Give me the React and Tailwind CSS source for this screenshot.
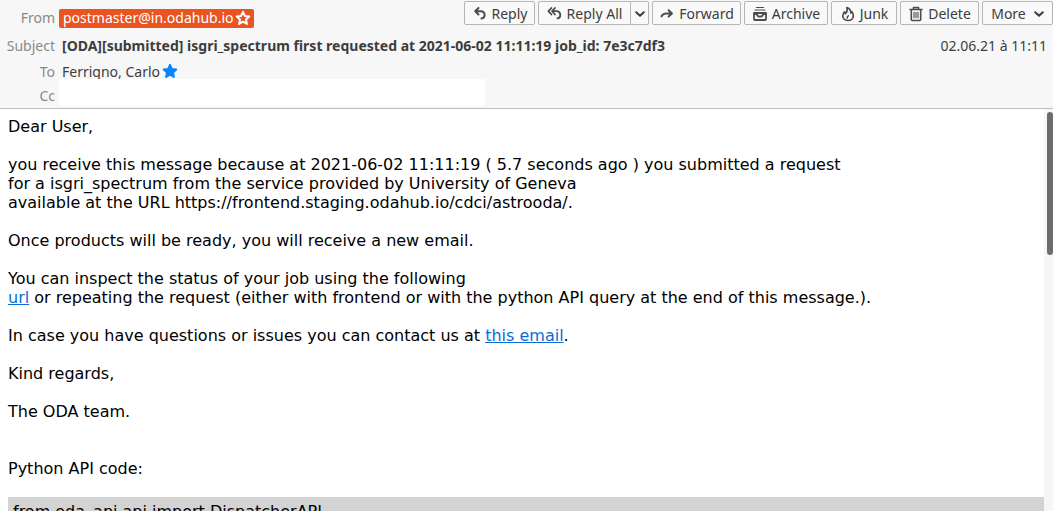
import React from "react";

const Icon = ({ children, className = "" }) => (
  <svg
    viewBox="0 0 16 16"
    className={"size-4 shrink-0 fill-none stroke-[#4c4c4c] stroke-2 " + className}
    strokeLinecap="round"
    strokeLinejoin="round"
    aria-hidden="true"
  >
    {children}
  </svg>
);

const ReplyIcon = () => (
  <Icon>
    <path d="M6.500 2 3.200 5.200l3.300 3.300M3.600 5.200H9a3.600 3.600 0 0 1 3.600 3.700c0 1.900-1.200 3.200-3.100 3.500" />
  </Icon>
);
const ReplyAllIcon = () => (
  <Icon>
    <path d="M4.400 2 1.400 5.200l3 3.300M8 2 5 5.200l3 3.300M5.400 5.200h4.200a3.600 3.600 0 0 1 3.700 3.700c0 1.900-1 3.200-2.800 3.500" strokeWidth="1.800" />
  </Icon>
);
const ForwardIcon = () => (
  <Icon>
    <path d="M9.600 4.200 13 7.400l-3.400 3.200M12.600 7.400H7.500c-2.600 0-4.200 1-5 3" />
  </Icon>
);
const ArchiveIcon = () => (
  <Icon>
    <path d="M4.500 1.500h7M3 4h10" strokeWidth="1.200" />
    <path d="M2 7h12v6a1 1 0 0 1-1 1H3a1 1 0 0 1-1-1zM2 8.200h2.800c.4 1.600 1.500 2.400 3.200 2.400s2.800-.8 3.200-2.400H14" strokeWidth="1.800" />
  </Icon>
);
const JunkIcon = () => (
  <Icon>
    <path d="M6.800 1.500c3 1 4.200 3 3.900 5.500.7-.3 1-.7 1.200-1.200 1 1.200 1.400 2.500 1.400 3.900 0 2.800-2.200 4.800-5.200 4.800s-5.300-2-5.300-4.600c0-1.600.6-2.800 1.800-4 .1.800.3 1.200.8 1.600C7.300 5.800 7.700 3.800 6.800 1.500z" strokeWidth="1.700" />
    <path d="M8.300 9.800c-.9.700-1.300 1.400-1.100 2.300" strokeWidth="1.500" />
  </Icon>
);
const DeleteIcon = () => (
  <Icon>
    <path d="M2 3.500h12M5.500 3V1.500h5V3M3.300 4v9.500a1 1 0 0 0 1 1h7.400a1 1 0 0 0 1-1V4" strokeWidth="1.600" />
    <path d="M6 6.200v5.600M8 6.200v5.600M10 6.200v5.600" strokeWidth="1.100" />
  </Icon>
);
const Chevron = () => (
  <svg viewBox="0 0 10 10" className="size-2.5 shrink-0 fill-none stroke-[#3d3d3d] stroke-2" strokeLinecap="round" strokeLinejoin="round" aria-hidden="true">
    <path d="M1.200 3.200 5 6.800l3.800-3.600" />
  </svg>
);
const Star = ({ className }) => (
  <svg viewBox="0 0 16 16" className={"size-4 shrink-0 " + className} strokeLinejoin="round" aria-hidden="true">
    <path d="m8 1.800 1.900 4.100 4.400.5-3.300 3 .9 4.500L8 11.700l-3.900 2.200.9-4.500-3.300-3 4.400-.5z" />
  </svg>
);

const button =
  "flex h-6 items-center justify-center gap-1 rounded-xs border border-[#b5b5b5] bg-[#f9f9f9] pt-0.5 whitespace-nowrap";
const label = "w-[55px] shrink-0 text-right text-[#8a8a85]";

export default function App() {
  return (
    <div className="flex h-screen flex-col overflow-hidden bg-white">
      <header className="shrink-0 border-b border-[#bcbcbc] bg-[#f7f7f7] pb-0.5 font-['Noto_Sans',sans-serif] text-sm leading-5 text-[#3d3d3d]">
        <div className="flex h-9 justify-between">
          <div className="flex items-center gap-1">
            <span className={label}>From</span>
            <a href="mailto:postmaster@in.odahub.io" className="flex h-[19px] items-center gap-px rounded-xs bg-[#e95420] pr-[3px] pl-1 text-white">
              postmaster@in.odahub.io
              <Star className="fill-none stroke-white stroke-2" />
            </a>
          </div>
          <div className="flex gap-[3px] pt-px">
            <button className={button + " w-[71px]"}><ReplyIcon />Reply</button>
            <div className="flex">
              <button className={button + " w-[93px] rounded-r-none"}><ReplyAllIcon />Reply All</button>
              <button aria-label="More reply options" className={button + " w-[18px] rounded-l-none border-l-0"}><Chevron /></button>
            </div>
            <button className={button + " w-[89px]"}><ForwardIcon />Forward</button>
            <button className={button + " w-[84px]"}><ArchiveIcon />Archive</button>
            <button className={button + " w-[66px]"}><JunkIcon />Junk</button>
            <button className={button + " w-[79px]"}><DeleteIcon />Delete</button>
            <button className={button + " w-[71px] gap-2"}>More<Chevron /></button>
          </div>
        </div>
        <div className="flex items-center gap-[7px] pr-1.5">
          <span className={label}>Subject</span>
          <h1 className="grow font-bold">[ODA][submitted] isgri_spectrum first requested at 2021-06-02 11:11:19 job_id: 7e3c7df3</h1>
          <time>02.06.21 à 11:11</time>
        </div>
        <div className="flex h-[23px] gap-[7px] overflow-hidden pt-1.5">
          <span className={label}>To</span>
          <span className="flex">
            Ferrigno, Carlo
            <Star className="mt-px ml-0.5 fill-[#0a84ff] stroke-[#0a84ff] stroke-2" />
          </span>
        </div>
        <div className="flex h-[27px] gap-1">
          <span className={label + " pt-[7px]"}>Cc</span>
          <span className="w-[426px] bg-white" />
        </div>
      </header>
      <div className="flex min-h-0 grow">
        <main className="min-w-0 grow overflow-hidden pt-2 pl-2 font-['DejaVu_Sans',sans-serif] text-base leading-[19px] text-black">
          <p>Dear User,</p>
          <p className="mt-[19px]">
            you receive this message because at 2021-06-02 11:11:19 ( 5.7 seconds ago ) you submitted a request<br />
            for a isgri_spectrum from the service provided by University of Geneva<br />
            available at the URL https://frontend.staging.odahub.io/cdci/astrooda/.
          </p>
          <p className="mt-[19px]">Once products will be ready, you will receive a new email.</p>
          <p className="mt-[19px]">
            You can inspect the status of your job using the following<br />
            <a href="#status" className="text-[#0a6cd6] underline">url</a> or repeating the request (either with frontend or with the python API query at the end of this message.).
          </p>
          <p className="mt-[19px]">
            In case you have questions or issues you can contact us at <a href="#contact" className="text-[#0a6cd6] underline">this email</a>.
          </p>
          <p className="mt-[19px]">Kind regards,</p>
          <p className="mt-[19px]">The ODA team.</p>
          <p className="mt-[38px]">Python API code:</p>
          <div className="mt-[19px] bg-[#d3d3d3] p-[5px]">from oda_api.api import DispatcherAPI</div>
        </main>
        <div className="flex w-[9px] shrink-0 justify-end bg-[#f6f6f6] pt-[3px]">
          <div className="h-[143px] w-1.5 rounded-full bg-[#6b6c6b]" />
        </div>
      </div>
    </div>
  );
}
